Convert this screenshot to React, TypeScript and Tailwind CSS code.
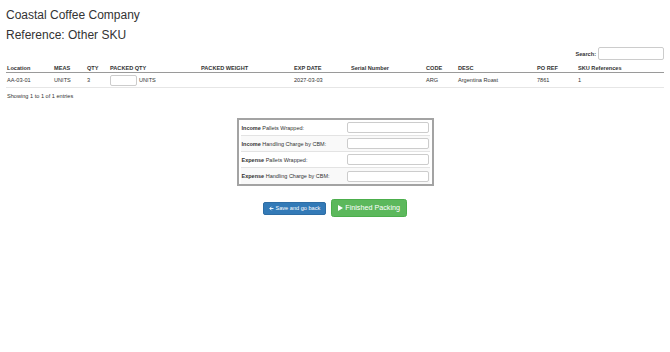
import React from "react";

const cols = [
  { h: "Location", w: 47, v: "AA-03-01" },
  { h: "MEAS", w: 33, v: "UNITS" },
  { h: "QTY", w: 23, v: "3" },
  { h: "PACKED QTY", w: 91, v: "__input__" },
  { h: "PACKED WEIGHT", w: 93, v: "" },
  { h: "EXP DATE", w: 57, v: "2027-03-03" },
  { h: "Serial Number", w: 75, v: "" },
  { h: "CODE", w: 32, v: "ARG" },
  { h: "DESC", w: 79, v: "Argentina Roast" },
  { h: "PO REF", w: 41, v: "7861" },
  { h: "SKU References", w: 86, v: "1" },
];

const formRows = [
  { b: "Income", t: " Pallets Wrapped:" },
  { b: "Income", t: " Handling Charge by CBM:" },
  { b: "Expense", t: " Pallets Wrapped:" },
  { b: "Expense", t: " Handling Charge by CBM:" },
];

export default function App() {
  return (
    <div
      className="w-[670px] h-[352px] bg-white text-[#333] px-[6px] overflow-hidden"
      style={{ fontFamily: '"Liberation Sans", Arial, sans-serif' }}
    >
      <h2 className="text-[12px] leading-[13.2px] pt-[9px] font-normal">Coastal Coffee Company</h2>
      <h2 className="text-[12px] leading-[13.2px] mt-[7px] font-normal">Reference: Other SKU</h2>

      <div className="flex justify-end items-center gap-[2px] mt-[5px]">
        <span className="text-[5.6px] font-bold leading-[8px]">Search:</span>
        <div className="w-[66px] h-[13px] border border-[#ccc] rounded-[2px] bg-white"></div>
      </div>

      <div className="mt-[1px]">
        <div className="flex h-[12px] border-b border-[#9a9a9a] items-end">
          {cols.map((c) => (
            <div
              key={c.h}
              style={{ width: c.w }}
              className="shrink-0 pl-[1px] text-[5.6px] font-bold leading-[8px] whitespace-nowrap"
            >
              {c.h}
            </div>
          ))}
        </div>
        <div className="flex h-[15px] border-b border-[#e6e6e6] items-center">
          {cols.map((c) => (
            <div
              key={c.h}
              style={{ width: c.w }}
              className="shrink-0 pl-[1px] text-[5.6px] leading-[8px] whitespace-nowrap flex items-center"
            >
              {c.v === "__input__" ? (
                <>
                  <div className="w-[27px] h-[11px] border border-[#ccc] rounded-[2px] bg-white mr-[2px]"></div>
                  <span>UNITS</span>
                </>
              ) : (
                c.v
              )}
            </div>
          ))}
        </div>
        <div className="text-[5.6px] leading-[8px] mt-[4px] pl-[1px]">Showing 1 to 1 of 1 entries</div>
      </div>

      <div className="flex justify-center mt-[18px]">
        <div className="w-[197px] border-2 border-[#a3a3a3] px-[2px] bg-white">
          {formRows.map((r, i) => (
            <div
              key={i}
              className={
                "flex items-center h-[16px] justify-between " +
                (i % 2 === 1 ? "bg-[#f9f9f9] " : "bg-white ") +
                (i < 3 ? "border-b border-[#e3e3e3]" : "")
              }
            >
              <span className="text-[5.5px] leading-[8px] pl-[1px] whitespace-nowrap">
                <b>{r.b}</b>
                {r.t}
              </span>
              <div className="w-[82px] h-[11px] border border-[#ccc] rounded-[2px] bg-white mr-[1px]"></div>
            </div>
          ))}
        </div>
      </div>

      <div className="flex justify-center items-center gap-[5px] mt-[13px]">
        <button className="h-[13.5px] px-[5px] bg-[#337ab7] border border-[#2e6da4] rounded-[2px] text-white text-[5.6px] leading-[8px] flex items-center gap-[1.5px]">
          <svg width="5" height="5" viewBox="0 0 10 10">
            <path d="M9 5H2M5 1.5L1.5 5L5 8.5" stroke="white" strokeWidth="1.8" fill="none" />
          </svg>
          <span>Save and go back</span>
        </button>
        <button className="h-[18px] px-[6px] bg-[#5cb85c] border border-[#4cae4c] rounded-[2.5px] text-white text-[7.2px] leading-[10px] flex items-center gap-[2px]">
          <svg width="5" height="6" viewBox="0 0 5 6">
            <path d="M0 0L5 3L0 6Z" fill="white" />
          </svg>
          <span>Finished Packing</span>
        </button>
      </div>
    </div>
  );
}
